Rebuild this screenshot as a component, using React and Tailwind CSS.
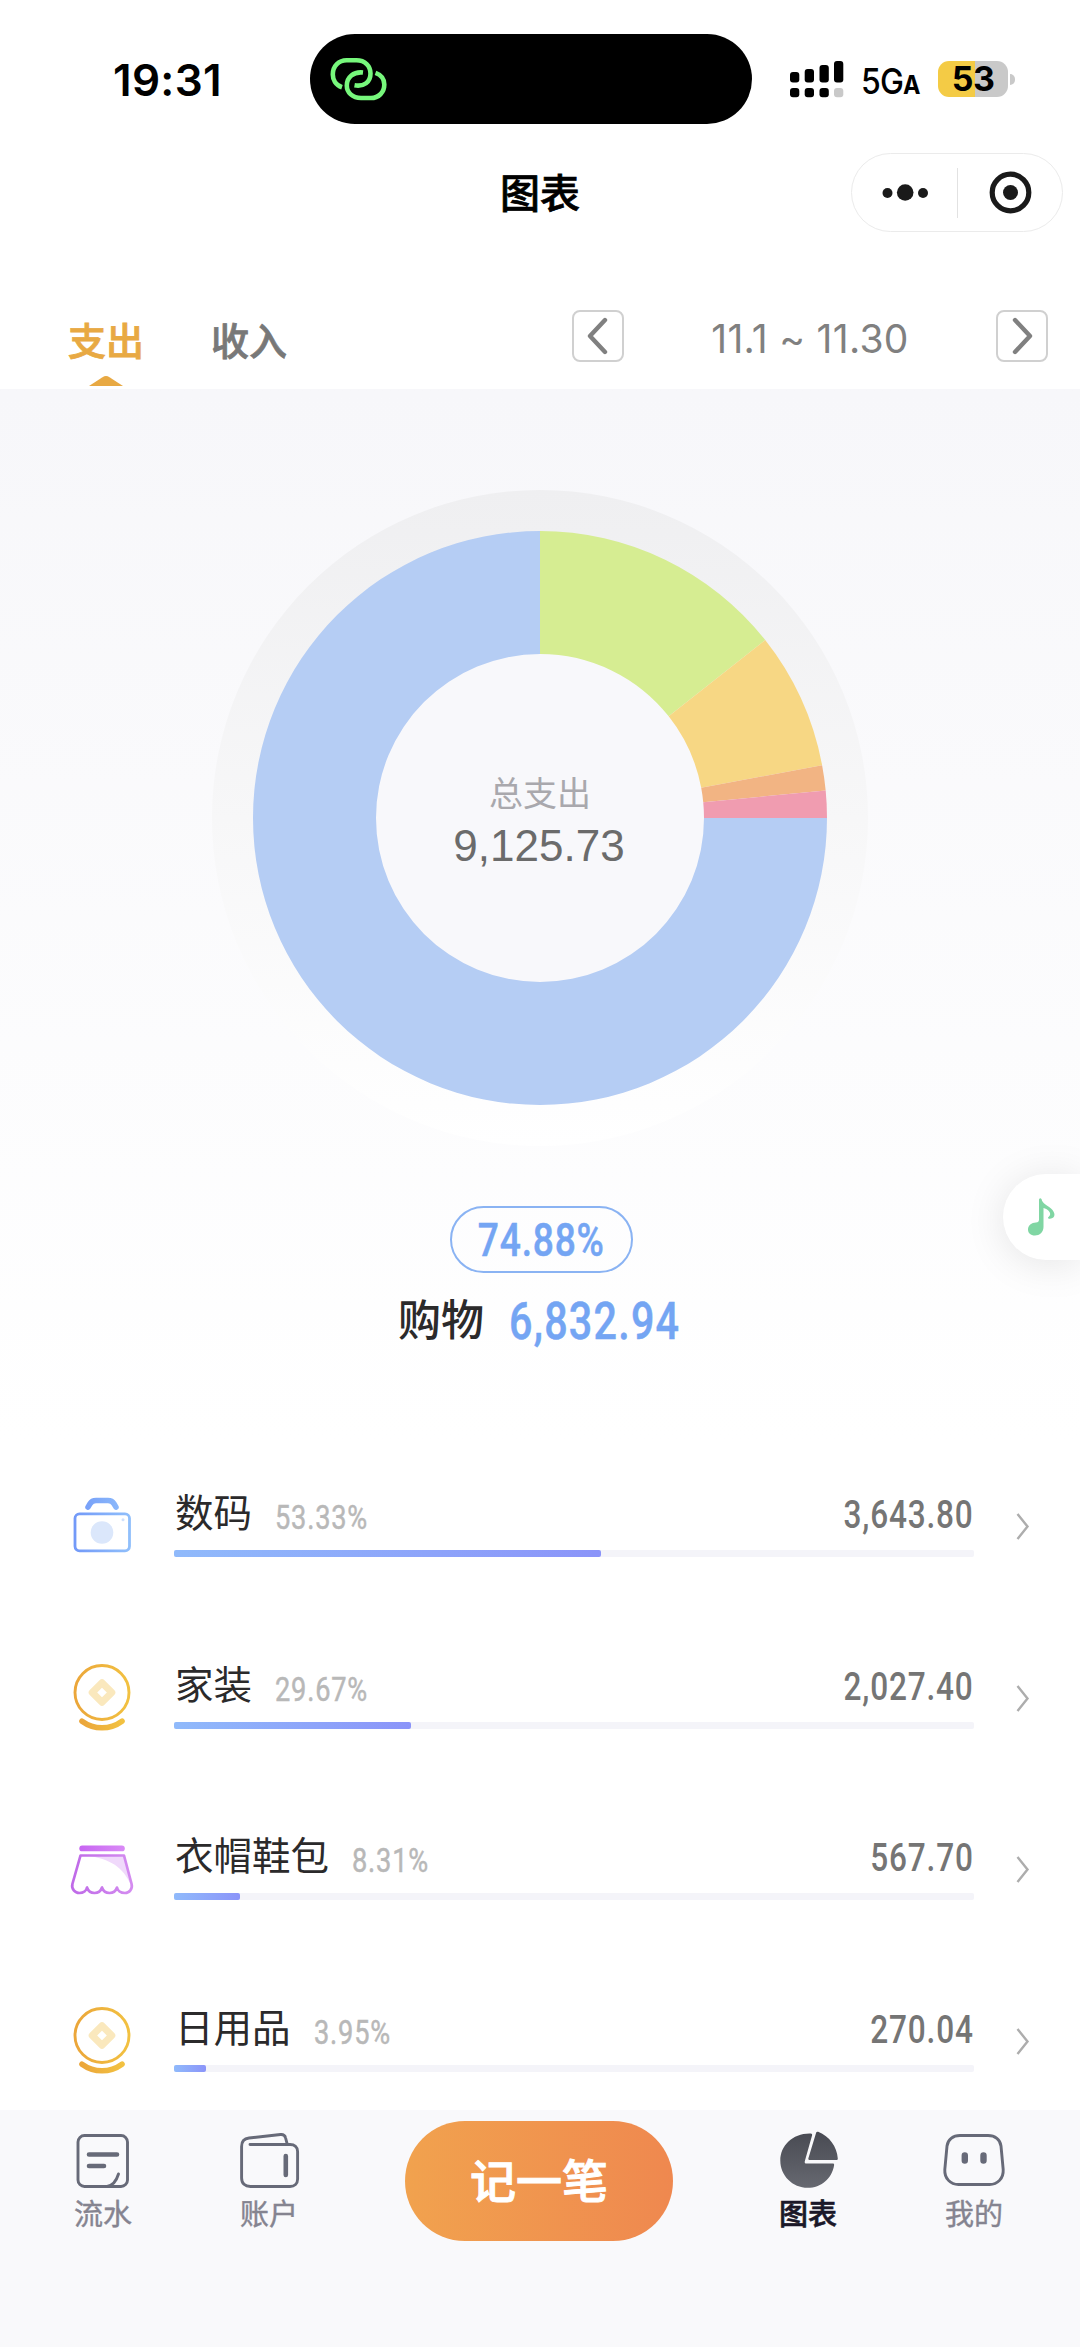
const categories = [
    { name: "数码", percent: "53.33%", amount: "3,643.80", Icon: CameraIcon },
    { name: "家装", percent: "29.67%", amount: "2,027.40", Icon: CoinIcon },
    { name: "衣帽鞋包", percent: "8.31%", amount: "567.70", Icon: SkirtIcon },
    { name: "日用品", percent: "3.95%", amount: "270.04", Icon: CoinIcon },
]

// angles in degrees, clockwise from 12 o'clock
const slices = [
    { from: 0, to: 51.7, color: "#d6ed92" },
    { from: 51.7, to: 79.4, color: "#f7d784" },
    { from: 79.4, to: 84.5, color: "#f2b483" },
    { from: 84.5, to: 90, color: "#f09cb0" },
    { from: 90, to: 360, color: "#b5cdf4" },
]

function point(r, deg) {
    const rad = (deg * Math.PI) / 180
    return `${(328 + r * Math.sin(rad)).toFixed(2)} ${(328 - r * Math.cos(rad)).toFixed(2)}`
}

function slicePath(from, to) {
    const large = to - from > 180 ? 1 : 0
    return `M${point(287, from)} A287 287 0 ${large} 1 ${point(287, to)} L${point(164, to)} A164 164 0 ${large} 0 ${point(164, from)} Z`
}

function CameraIcon() {
    return (
        <svg width="66" height="66" viewBox="0 0 66 66" fill="none">
            <defs>
                <linearGradient id="camera" x1="5" y1="0" x2="61" y2="0" gradientUnits="userSpaceOnUse">
                    <stop offset="0" stopColor="#7299f8" />
                    <stop offset="1" stopColor="#90bffb" />
                </linearGradient>
            </defs>
            <path d="M19 14.200L21 10.800C22.500 8.400 24 7.600 27 7.600H39C42 7.600 43.500 8.400 45 10.800L47 14.200" stroke="url(#camera)" strokeWidth="5.500" strokeLinecap="round" />
            <rect x="6" y="20.800" width="54.500" height="37" rx="4.500" stroke="url(#camera)" strokeWidth="2.800" />
            <circle cx="33" cy="39.500" r="11.300" fill="#dbe7fb" />
            <circle cx="54" cy="26.800" r="1.500" fill="#cfe0fb" />
        </svg>
    )
}

function CoinIcon() {
    return (
        <svg width="66" height="72" viewBox="0 0 66 72" fill="none">
            <defs>
                <linearGradient id="coin" x1="0" y1="0" x2="1" y2="0">
                    <stop offset="0" stopColor="#eba63a" />
                    <stop offset="1" stopColor="#f2c141" />
                </linearGradient>
            </defs>
            <circle cx="33" cy="30.500" r="27" stroke="url(#coin)" strokeWidth="2.900" />
            <path d="M33 20.700 42.800 30.500 33 40.300 23.200 30.500Z" stroke="#fae8bd" strokeWidth="7" strokeLinejoin="round" />
            <path d="M13 59.200C25 68 41 68 53 59.200" stroke="url(#coin)" strokeWidth="5.600" strokeLinecap="round" />
        </svg>
    )
}

function SkirtIcon() {
    return (
        <svg width="66" height="66" viewBox="0 0 66 66" fill="none">
            <defs>
                <linearGradient id="skirt" x1="0" y1="0" x2="1" y2="0">
                    <stop offset="0" stopColor="#bf6ae8" />
                    <stop offset="1" stopColor="#d48cf0" />
                </linearGradient>
                <linearGradient id="waist" x1="0" y1="0" x2="1" y2="0">
                    <stop offset="0" stopColor="#c765f2" />
                    <stop offset="1" stopColor="#d98af6" />
                </linearGradient>
            </defs>
            <path d="M17 19.500H54.500L62 49C54 31 42 23 17 19.500Z" fill="#f0d9fb" />
            <rect x="10.300" y="9.500" width="45.500" height="5.800" rx="2.900" fill="url(#waist)" />
            <path d="M11.500 19.500H55L62.600 48C63.800 53 60.300 57 56 57C51.500 57 48.500 54.500 48 51.500C47 54.500 44.500 57 40.500 57C36.500 57 34 54.500 33 51.500C32 54.500 29.500 57 25.500 57C21.500 57 19 54.500 18 51.500C17.500 54.500 14.500 57 10.300 57C6 57 2.200 53 3.400 48Z" stroke="url(#skirt)" strokeWidth="2.700" strokeLinejoin="round" />
        </svg>
    )
}

function FlowIcon() {
    return (
        <svg width="60" height="60" viewBox="0 0 60 60" fill="none" stroke="#676a78" strokeLinecap="round">
            <rect x="5" y="4.500" width="49.500" height="51" rx="6.500" strokeWidth="2.900" />
            <path d="M16 23.500H44M16 35H31" strokeWidth="4.600" />
            <path d="M45.500 43C43.500 49.500 40.500 54.500 34 55.500" strokeWidth="2.900" />
        </svg>
    )
}

function WalletIcon() {
    return (
        <svg width="62" height="60" viewBox="0 0 62 60" fill="none" stroke="#676a78" strokeLinecap="round">
            <path d="M12 13.500H52C56.500 13.500 59.600 16 59.600 20.500V48C59.600 52.500 56.500 55.500 52 55.500H12.500C7 55.500 3.600 52.500 3.600 47V15.500C3.600 10.500 6 7.500 11 7L42.500 3.500C45.500 3.200 47 4.500 47.600 7L49.200 13" strokeWidth="2.900" />
            <path d="M47.800 25V44" strokeWidth="4.600" />
        </svg>
    )
}

function PieIcon() {
    return (
        <svg width="60" height="60" viewBox="0 0 60 60" fill="none">
            <defs>
                <linearGradient id="pie" x1="0" y1="0" x2="0" y2="60" gradientUnits="userSpaceOnUse">
                    <stop offset="0" stopColor="#484a52" />
                    <stop offset="1" stopColor="#686a72" />
                </linearGradient>
            </defs>
            <path d="M32.800 2.600C33.900 2.700 34.300 3.400 34.100 4.200L26.800 30.200C26.400 31.700 27.100 32.600 28.400 32.600H54.800C55.800 32.600 56.300 33.200 56.100 34.200C54 47.500 43 56.800 29.800 56.800C14.500 56.800 2.300 44.500 2.300 29.700C2.300 14.500 15 2 32.800 2.600Z" fill="url(#pie)" />
            <path d="M38.200 1.600C38.500 0.700 39.300 0.400 40.200 0.800C51.500 5.500 59 15.500 59.800 27.600C59.800 28.600 59.300 29.100 58.300 29.100H31.800C30.600 29.100 30.100 28.300 30.400 27.200Z" fill="url(#pie)" />
        </svg>
    )
}

function FaceIcon() {
    return (
        <svg width="64" height="60" viewBox="0 0 64 60" fill="none" stroke="#676a78" strokeLinecap="round">
            <path d="M18 4.500H46C53 4.500 58.300 8.500 59 15L61.200 38.500C61.700 47.500 55.500 53.500 47.500 53.500H16.500C8.500 53.500 2.300 47.500 2.800 38.500L5 15C5.700 8.500 11 4.500 18 4.500Z" strokeWidth="2.900" />
            <path d="M22.800 24.500V29.500M41.500 24.500V29.500" strokeWidth="6.400" />
        </svg>
    )
}

function StatusBar() {
    return (
        <div className="flex items-center h-[158px] shrink-0">
            <div className="w-[310px] pl-[113px] pt-[2px] text-[44px] font-semibold leading-none tracking-[0.3px] text-black">19:31</div>
            <div className="w-[442px] h-[90px] rounded-full bg-black flex items-center pl-5">
                <svg width="58" height="46" viewBox="0 0 58 46" fill="none" stroke="#77f77c" strokeWidth="4.600">
                    <path d="M12 31.200C5.500 29 2.800 23.500 2.800 18.500C2.800 10 9 4.300 16.500 4.300H26.500C35 4.300 40.500 10 40.500 17.500C40.500 26 34 31 24.500 29.300" />
                    <path d="M45.500 16.800C51.500 19 54.300 23.500 54.300 28.500C54.300 36.500 48.500 42 41 42H31C22.500 42 16.800 36.500 16.800 29.500C16.800 21 23.500 15.500 33 16.500" />
                </svg>
            </div>
            <div className="flex items-center pl-[38px]">
                <svg width="54" height="38" viewBox="0 0 54 38">
                    <rect x="0" y="12" width="9.300" height="10.500" rx="3" />
                    <rect x="14.700" y="9" width="9.300" height="13.500" rx="3" />
                    <rect x="29.500" y="5" width="9.300" height="17.500" rx="3" />
                    <rect x="44" y="1" width="9.300" height="21.500" rx="3" />
                    <rect x="0" y="28" width="9.300" height="9.300" rx="3" />
                    <rect x="14.700" y="28" width="9.300" height="9.300" rx="3" />
                    <rect x="29.500" y="28" width="9.300" height="9.300" rx="3" />
                    <rect x="44" y="28" width="9.300" height="9.300" rx="3" fill="#c9c9c9" />
                </svg>
                <div className="ml-[17px] w-[77px] flex items-baseline pt-1 leading-none font-medium text-black">
                    <span className="w-[42px] shrink-0 text-[36px] tracking-[-1px] origin-left scale-x-[0.89]">5G</span>
                    <span className="text-[26px] font-bold origin-left scale-x-[0.9]">A</span>
                </div>
                <div className="w-[70px] h-9 rounded-[11px] bg-linear-to-r from-[#f4cb45] from-53% to-[#c9c9c9] to-53% flex items-center justify-center text-[34px] leading-none font-bold tracking-[-0.5px] text-black">53</div>
                <div className="ml-[2px] w-[5px] h-[11px] rounded-r-full bg-[#c9c9c9]"></div>
            </div>
        </div>
    )
}

function TitleBar() {
    return (
        <div className="grid grid-cols-3 items-center h-[79px] -mt-[5px] shrink-0 pr-[17px]">
            <div></div>
            <div className="text-center pl-[17px] pt-[2px] text-[40px] leading-none font-medium text-black [-webkit-text-stroke:0.7px]">图表</div>
            <div className="justify-self-end w-[212px] h-[79px] rounded-full border border-[#ebebeb] flex items-center">
                <div className="w-[106px] h-[50px] border-r border-[#e2e2e2] flex items-center justify-center">
                    <svg width="46" height="18" viewBox="0 0 46 18" fill="#1a1a1a">
                        <circle cx="5.500" cy="9" r="5" />
                        <circle cx="23.200" cy="8.500" r="8.300" />
                        <circle cx="41" cy="9" r="5" />
                    </svg>
                </div>
                <div className="flex-1 flex justify-center">
                    <svg width="44" height="44" viewBox="0 0 44 44" fill="none">
                        <circle cx="22.500" cy="21.500" r="18.300" stroke="#1a1a1a" strokeWidth="5.200" />
                        <circle cx="22.500" cy="21.500" r="7.500" fill="#1a1a1a" />
                    </svg>
                </div>
            </div>
        </div>
    )
}

function PagerButton({ d }) {
    return (
        <button className="w-[52px] h-[52px] rounded-lg border-2 border-[#d0d0d0] flex items-center justify-center">
            <svg width="24" height="38" viewBox="0 0 24 38" fill="none" stroke="#808080" strokeWidth="4.400" strokeLinecap="round" strokeLinejoin="round">
                <path d={d} />
            </svg>
        </button>
    )
}

function Tabs() {
    return (
        <div className="flex justify-between h-[157px] pt-[78px] pl-[68px] pr-8 shrink-0">
            <div className="flex gap-[67px] text-[38px] leading-none font-medium [-webkit-text-stroke:0.8px]">
                <div className="flex flex-col justify-between pt-[12px] pb-[3px] text-[#e8a943]">
                    支出
                    <svg width="34" height="10" viewBox="0 0 34 10" fill="#e8a943" className="ml-[21px]">
                        <path d="M0 10 13.500 1.200Q17 -1 20.500 1.200L34 10Z" />
                    </svg>
                </div>
                <div className="pt-[12px] text-[#787878]">收入</div>
            </div>
            <div className="flex justify-between w-[476px]">
                <PagerButton d="M19 3 4 19 19 35" />
                <div className="pt-[9px] text-[39px] leading-none text-[#808080] tracking-[0.3px]">11.1 ~ 11.30</div>
                <PagerButton d="M5 3 20 19 5 35" />
            </div>
        </div>
    )
}

function Donut() {
    return (
        <svg width="656" height="656" viewBox="0 0 656 656">
            <defs>
                <linearGradient id="halo" x1="0" y1="0" x2="0" y2="1">
                    <stop offset="0" stopColor="#efeff1" />
                    <stop offset="1" stopColor="#ffffff" />
                </linearGradient>
            </defs>
            <circle cx="328" cy="328" r="328" fill="url(#halo)" />
            <circle cx="328" cy="328" r="166" fill="#f8f8fb" />
            {slices.map((s) => (
                <path key={s.color} d={slicePath(s.from, s.to)} fill={s.color} />
            ))}
            <text x="328" y="316" textAnchor="middle" fontSize="34" fill="#a9a8ad" className="font-['Noto_Sans_CJK_SC',sans-serif]">总支出</text>
            <text x="327" y="371" textAnchor="middle" fontSize="44" fill="#6b6b6b" className="font-['Liberation_Sans',sans-serif]">9,125.73</text>
        </svg>
    )
}

function CategoryRow({ name, percent, amount, Icon }) {
    return (
        <div className="flex items-center h-[171.800px] shrink-0 pl-[69px]">
            <div className="w-[66px] shrink-0"><Icon /></div>
            <div className="w-[800px] ml-[39px] h-[70px] flex flex-col">
                <div className="flex items-baseline h-[59px] pl-px leading-none">
                    <span className="text-[38.500px] text-[#2b2a2b] leading-none font-['Noto_Sans_CJK_SC',sans-serif]">{name}</span>
                    <span className="relative top-[2px] ml-[23px] text-[34px] text-[#b8b8b8] font-['Roboto',sans-serif] tracking-[1px] origin-left scale-x-[0.8] [-webkit-text-stroke:0.5px]">{percent}</span>
                    <span className="relative top-px ml-auto text-[39px] font-medium text-[#757575] font-['Roboto',sans-serif] tracking-[1px] origin-right scale-x-[0.81]">{amount}</span>
                </div>
                <div className="h-[7px] rounded-[2px] bg-[#f4f4f9]">
                    <div className="h-full rounded-[2px] bg-linear-to-r from-[#90bafb] to-[#8b94f9]" style={{ width: percent }}></div>
                </div>
            </div>
            <svg width="14" height="28" viewBox="0 0 14 28" fill="none" stroke="#adadad" strokeWidth="2.400" className="ml-[42px]">
                <path d="M1.500 2 11.500 14.500 1.500 27" />
            </svg>
        </div>
    )
}

function NavItem({ label, active, children }) {
    return (
        <div className="w-[112px] flex flex-col items-center">
            {children}
            <span className={active
                ? "mt-[9px] text-[29px] leading-none font-medium text-[#1b1828] [-webkit-text-stroke:0.6px]"
                : "mt-[9px] text-[29px] leading-none text-[#858490] [-webkit-text-stroke:0.4px]"}>{label}</span>
        </div>
    )
}

function BottomNav() {
    return (
        <div className="flex items-start h-[237px] shrink-0 bg-[#f9f9fb] pl-[47px]">
            <div className="flex gap-[54px] pt-[21px]">
                <NavItem label="流水"><FlowIcon /></NavItem>
                <NavItem label="账户"><WalletIcon /></NavItem>
            </div>
            <button className="ml-[80px] mt-[11px] w-[268px] h-[120px] rounded-full bg-linear-to-r from-[#f1a24e] to-[#ef884f] text-white text-[46px] leading-none font-medium [-webkit-text-stroke:1px]">记一笔</button>
            <div className="flex gap-[54px] pt-[21px] ml-[79px]">
                <NavItem label="图表" active><PieIcon /></NavItem>
                <NavItem label="我的"><FaceIcon /></NavItem>
            </div>
        </div>
    )
}

export default function App() {
    return (
        <div className="relative w-[1080px] h-[2347px] flex flex-col overflow-hidden bg-white font-['Inter','Noto_Sans_CJK_SC',sans-serif]">
            <StatusBar />
            <TitleBar />
            <Tabs />
            <div className="flex flex-col items-center h-[1051px] shrink-0 pt-[101px] bg-linear-to-b from-[#f7f7fa] to-white">
                <Donut />
                <div className="mt-[60px] ml-[2px] w-[183px] h-[67px] rounded-full border-2 border-[#8ab3f3] flex items-center justify-center text-[#74a5f3] text-[47px] leading-none font-medium font-['Roboto',sans-serif]">
                    <span className="tracking-[1px] scale-x-[0.79] [-webkit-text-stroke:0.5px]">74.88%</span>
                </div>
                <div className="mt-[20px] w-[284px] flex items-baseline leading-none">
                    <span className="shrink-0 w-[111px] text-[43px] font-medium text-[#2b2a2b]">购物</span>
                    <span className="relative top-[3px] text-[51px] font-medium text-[#74a5f3] font-['Roboto',sans-serif] tracking-[1.500px] origin-left scale-x-[0.81] [-webkit-text-stroke:0.5px]">6,832.94</span>
                </div>
            </div>
            <div className="flex-1 min-h-0 overflow-hidden flex flex-col">
                {categories.map((c) => (
                    <CategoryRow key={c.name} {...c} />
                ))}
            </div>
            <BottomNav />
            <div className="absolute right-0 top-[1174px] w-[77px] h-[86px] rounded-l-full bg-white shadow-[0_4px_40px_rgba(0,0,0,0.100)] flex items-center pl-[24px]">
                <svg width="30" height="38" viewBox="0 0 30 38" fill="#80d6a3">
                    <path d="M12 1.500Q13 -0.500 14.500 1C15.500 6 20 7 24 10.500C29 15 28.500 20.500 23 20.800C20.500 20.800 20.500 19.500 22 18.500C25 16 22 11.500 16.500 10V29C16.500 34 12.500 37.500 8 37.500C3.500 37.500 1 35 1 31.500C1 27.500 4.500 24.500 9 24.500C11 24.500 12 23.500 12 21.500Z" />
                </svg>
            </div>
        </div>
    )
}
